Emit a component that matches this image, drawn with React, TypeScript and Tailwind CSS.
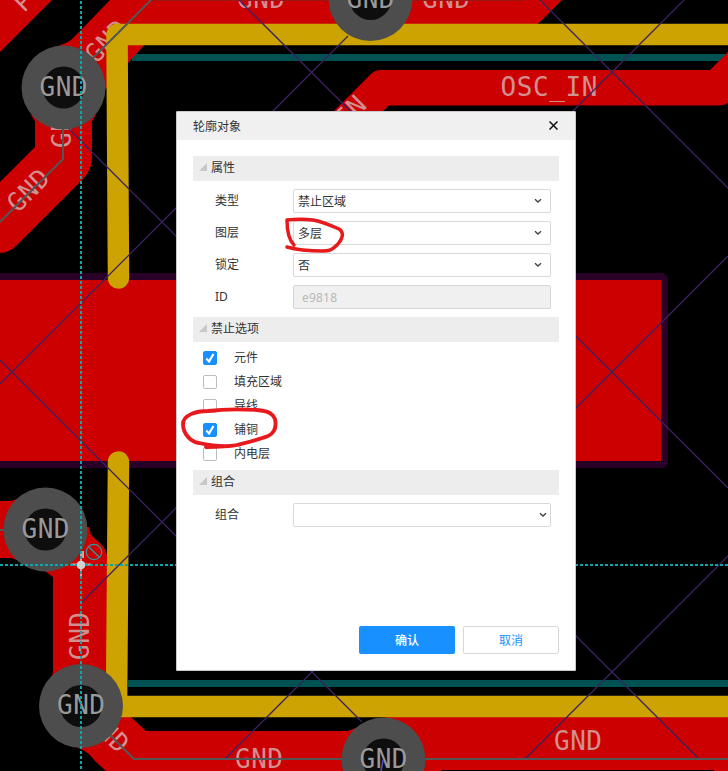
import type { ReactNode } from 'react';

const RED = '#cc0000';
const NET = "font-['DejaVu_Sans_Mono',monospace] text-[26px]";

function Net({ x, y, w = 48, rotate = 0, fill = '#d28f8f', children }: { x: number; y: number; w?: number; rotate?: number; fill?: string; children: string }) {
  return (
    <text x={-w / 2} y={9.5} textLength={w} lengthAdjust="spacing" transform={`translate(${x} ${y}) rotate(${rotate})`} fill={fill} className={NET}>
      {children}
    </text>
  );
}

function Via({ x, y }: { x: number; y: number }) {
  return (
    <g>
      <circle cx={x} cy={y} r="42" fill="#4d4d4d" />
      <circle cx={x} cy={y} r="21" fill="#0e0e0e" />
    </g>
  );
}

function Board() {
  return (
    <svg className="absolute inset-0" width="728" height="771" viewBox="0 0 728 771">
      <rect width="728" height="771" fill="#000" />
      <path d="M132 57.5H728M128 683.5H728" stroke="#005252" strokeWidth="7" />
      <g fill={RED}>
        <path d="M0 0H52L0 52Z" />
        <path d="M110 0H562L541 21Q537 25 530 30H158L128 63L103 92L40 60L60 45Q69 43 74 37L83 28Z" />
        <path d="M31 115H96L92 121V158Q92 170 82 180L17 245Q9 253 0 253V182L35 147V121Z" />
        <path d="M334 111L371 74Q375 70 381 70H710L728 52V103Q724 105.500 718 105.500H389L383 111Z" />
        <path d="M0 501H11L17 499L60 530L17 560L11 558H0Z" />
        <path d="M86 527H89L91 535L102 545Q107 551 107 557V700H53V676L50 680Q53 676 53 670V577L45 571L40 560Z" />
        <path d="M100 717H131L146 731H348L363 725L387 717H728V771H106L95 761Q88 751 78 748Z" />
      </g>
      <rect x="441" y="770" width="273" height="1" fill="#000" />
      <rect x="-20" y="273" width="688" height="195" rx="6" fill="#280028" />
      <rect x="-2" y="280" width="663" height="181" fill={RED} />
      <Net x={28} y={190} rotate={-45}>GND</Net>
      <Net x={61.5} y={124} rotate={-90}>GND</Net>
      <Net x={106} y={41} rotate={-45}>GND</Net>
      <Net x={23} y={1} w={16} rotate={-45}>P</Net>
      <Net x={261} y={-2}>GND</Net>
      <Net x={446} y={-2}>GND</Net>
      <Net x={549} y={86} w={97}>OSC_IN</Net>
      <Net x={350} y={111} w={32} rotate={-45}>IN</Net>
      <Net x={79.5} y={636} rotate={-90}>GND</Net>
      <Net x={108} y={731} rotate={45}>GND</Net>
      <Net x={259} y={758}>GND</Net>
      <Net x={578} y={740}>GND</Net>
      <g fill="none" stroke="#555" strokeWidth="2">
        <path d="M63 110V159L0 222M0 530H40M110 735L134 759" />
        <path d="M134 759H728" />
      </g>
      <path d="M150 .5H523" stroke="#9c1717" />
      <g fill="none" stroke="#cca300" strokeWidth="21.500" strokeLinecap="round" strokeLinejoin="round">
        <path d="M118.500 278L117 34.500H750" />
        <path d="M118.500 462L116.500 706.500H750" />
      </g>
      <path d="M90 61L151 0" stroke="#555" strokeWidth="2" />
      <path
        d="M348 36L0 384M684 0L81 603M728 256L226 758M728 556L526 758M68 128L698 758M239 0L728 488M540 0L728 188M0 360L362 722"
        stroke="#3b2260"
        strokeWidth="1.300"
        fill="none"
      />
      <Via x={63.5} y={87.5} />
      <Via x={370.5} y={-1} />
      <Via x={45.5} y={529.5} />
      <Via x={81} y={706} />
      <Via x={383.5} y={759.5} />
      <Net x={63.5} y={86} fill="#999">GND</Net>
      <Net x={370.5} y={-2} fill="#999">GND</Net>
      <Net x={45.5} y={528} fill="#999">GND</Net>
      <Net x={81} y={704.5} fill="#999">GND</Net>
      <Net x={383.5} y={758} fill="#999">GND</Net>
      <path d="M383 760L381 771" stroke="#5050cc" strokeWidth="1.500" />
      <path d="M71 564.500H91M81 553V577" stroke="#c9a5a5" strokeWidth="2" />
      <path d="M82 551V558" stroke="#c9a5a5" strokeWidth="4" />
      <path d="M81 1V771M0 565H728" stroke="#0aa8a8" strokeWidth="2" strokeDasharray="3 2" />
      <path d="M79 561H83L85 563V567L83 569H79L77 567V563Z" fill="#d0d0d0" />
      <g fill="none" stroke="#2a9d9d" strokeWidth="1.200">
        <circle cx="94" cy="552" r="7.700" />
        <path d="M88.500 546.500L99.500 557.500" />
      </g>
    </svg>
  );
}

function Chevron() {
  return (
    <svg width="8" height="6" viewBox="0 0 8 6" className="shrink-0">
      <path d="M1 1.300L4 4.100L7 1.300" fill="none" stroke="#444" strokeWidth="1.400" />
    </svg>
  );
}

function Section({ title }: { title: string }) {
  return (
    <div className="flex h-[25px] shrink-0 items-start bg-[#ededed] pl-[6px]">
      <svg width="8" height="8" viewBox="0 0 8 8" className="mt-[7px] mr-1">
        <path d="M8 0V8H0Z" fill="#c8c8c8" />
      </svg>
      <span className="leading-[24px]">{title}</span>
    </div>
  );
}

function Row({ label, children }: { label: string; children: ReactNode }) {
  return (
    <div className="flex h-6 pl-[22px]">
      <span className="w-[78px] leading-[23px]">{label}</span>
      {children}
    </div>
  );
}

function Select({ value, tight = false }: { value: string; tight?: boolean }) {
  return (
    <div className={`flex h-6 w-[258px] items-center justify-between rounded-[2px] border border-[#d9d9d9] bg-white pl-1 ${tight ? 'pr-[3px]' : 'pr-2'}`}>
      <span className="pt-[2px]">{value}</span>
      <Chevron />
    </div>
  );
}

function Check({ label, checked = false }: { label: string; checked?: boolean }) {
  return (
    <div className="flex h-6 items-center">
      <span className={`mr-[17px] flex size-[14px] items-center justify-center rounded-[2px] border ${checked ? 'border-[#1890ff] bg-[#1890ff]' : 'border-[#bdbdbd] bg-white'}`}>
        {checked && (
          <svg width="12" height="12" viewBox="0 0 12 12" className="shrink-0">
            <path d="M2.300 6.500L5 9.500L9.500 2" fill="none" stroke="#fff" strokeWidth="2.200" />
          </svg>
        )}
      </span>
      <span>{label}</span>
    </div>
  );
}

function Dialog() {
  return (
    <div className="absolute top-[111px] left-[176px] flex h-[560px] w-[400px] flex-col rounded-[1px] border border-[#c9c9c9] bg-white font-['Noto_Sans','Noto_Sans_CJK_SC',sans-serif] text-[12px] leading-4 text-[#333]">
      <div className="flex h-7 shrink-0 items-center justify-between bg-[#f0f0f0] pr-[17px] pl-4">
        <span className="pt-[2px]">轮廓对象</span>
        <svg width="9" height="9" viewBox="0 0 9 9" className="mb-px">
          <path d="M.5 .5L8.500 8.500M8.500 .5L.5 8.500" stroke="#111" strokeWidth="1.500" />
        </svg>
      </div>
      <div className="flex grow flex-col px-4 pt-4">
        <Section title="属性" />
        <div className="mt-2 flex flex-col gap-2">
          <Row label="类型"><Select value="禁止区域" /></Row>
          <Row label="图层"><Select value="多层" /></Row>
          <Row label="锁定"><Select value="否" /></Row>
          <Row label="ID">
            <div className="h-6 w-[258px] rounded-[2px] border border-[#d5d5d5] bg-[#f0f0f0] pl-2 leading-[24px] tracking-[0.2px] text-[#b8b8b8]">e9818</div>
          </Row>
        </div>
        <div className="mt-2 flex flex-col"><Section title="禁止选项" /></div>
        <div className="mt-1 mb-1 flex flex-col pl-[10px]">
          <Check label="元件" checked />
          <Check label="填充区域" />
          <Check label="导线" />
          <Check label="铺铜" checked />
          <Check label="内电层" />
        </div>
        <Section title="组合" />
        <div className="mt-2">
          <Row label="组合"><Select value="" tight /></Row>
        </div>
      </div>
      <div className="mb-4 flex h-7 justify-end gap-2 pr-4">
        <button className="w-24 rounded-[2px] bg-[#1890ff] pt-[2px] font-medium text-white">确认</button>
        <button className="w-24 rounded-[2px] border border-[#d9d9d9] pt-[2px] text-[#1890ff]">取消</button>
      </div>
    </div>
  );
}

function Marks() {
  return (
    <svg className="absolute inset-0" width="728" height="771" viewBox="0 0 728 771" fill="none" stroke="#e8191c" strokeLinecap="round" strokeLinejoin="round">
      <path strokeWidth="3.500" d="M294 245C289 240 287 233 287 220C296 219 305 219 313 220C323 222 330 225 339 229C345 233 342 239 338 244C331 251 328 251 323 251C308 251 297 250 287 247" />
      <path strokeWidth="3.800" d="M206 447C218 447 227 447 237 445C249 442 258 440 268 436C277 432 276 424 275 419C273 414 269 411 257 410C240 409 224 409 208 411C196 411 183 415 183 424C183 434 191 442 199 443C213 446 227 447 237 445" />
    </svg>
  );
}

export default function App() {
  return (
    <main className="relative h-[771px] w-[728px] overflow-hidden bg-black">
      <Board />
      <Dialog />
      <Marks />
    </main>
  );
}
